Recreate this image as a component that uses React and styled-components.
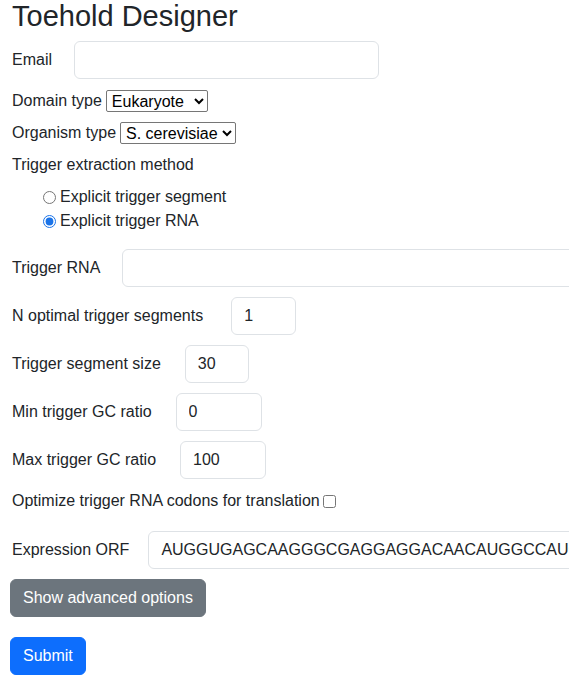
import React, { useState } from 'react';
import styled, { createGlobalStyle } from 'styled-components';

const GlobalStyle = createGlobalStyle`
  *, *::before, *::after { box-sizing: border-box; }
  body {
    margin: 0;
    font-family: "Liberation Sans", Arial, sans-serif;
    font-size: 16px;
    line-height: 1.5;
    color: #212529;
    background: #fff;
  }
`;

const Page = styled.div`
  padding: 0 12px;
  overflow: hidden;
`;

const Title = styled.h1`
  margin: 0 0 8px;
  font-size: 29px;
  font-weight: 500;
  line-height: 33px;
`;

const Row = styled.div`
  display: flex;
  align-items: center;
  gap: ${(p) => p.$gap ?? 24}px;
  margin-bottom: ${(p) => p.$mb ?? 10}px;
  white-space: nowrap;
`;

const Label = styled.label`
  flex: none;
`;

const TextInput = styled.input`
  flex: none;
  width: ${(p) => (p.$w ? `${p.$w}px` : 'auto')};
  min-width: ${(p) => (p.$w ? `${p.$w}px` : '0')};
  height: 38px;
  padding: 6px 12px;
  font: inherit;
  color: #212529;
  border: 1px solid #dee2e6;
  border-radius: 6px;
  background: #fff;
  outline: none;
`;

const Select = styled.select`
  font: inherit;
  font-size: 16px;
  height: 22px;
  padding: 0 1px;
  color: #000;
  border: 1px solid #767676;
  border-radius: 2px;
  background: #fff;
`;

const Inline = styled.div`
  display: flex;
  align-items: center;
  gap: ${(p) => p.$gap ?? 4}px;
  height: 24px;
  margin-bottom: ${(p) => p.$mb ?? 8}px;
`;

const RadioGroup = styled.div`
  padding-left: 31px;
  margin-bottom: 16px;
`;

const RadioLine = styled.label`
  display: flex;
  align-items: center;
  gap: 4px;
  height: 24px;

  input {
    margin: 0;
    width: 13px;
    height: 13px;
    accent-color: #1a73e8;
  }
`;

const Check = styled.input`
  margin: 0;
  width: 13px;
  height: 13px;
`;

const Button = styled.button`
  display: block;
  font: inherit;
  line-height: 24px;
  padding: 6px 12px;
  margin-left: -2px;
  margin-bottom: ${(p) => p.$mb ?? 0}px;
  color: #fff;
  border: 1px solid ${(p) => (p.$variant === 'primary' ? '#0d6efd' : '#6c757d')};
  background: ${(p) => (p.$variant === 'primary' ? '#0d6efd' : '#6c757d')};
  border-radius: 6px;
  cursor: pointer;
`;

export default function App() {
  const [method, setMethod] = useState('rna');
  return (
    <>
      <GlobalStyle />
      <Page>
        <Title>Toehold Designer</Title>

        <Row $gap={22}>
          <Label>Email</Label>
          <TextInput type="email" $w={305} />
        </Row>

        <Inline>
          <span>Domain type</span>
          <Select defaultValue="Eukaryote">
            <option>Prokaryote</option>
            <option>Eukaryote</option>
          </Select>
        </Inline>

        <Inline>
          <span>Organism type</span>
          <Select defaultValue="S. cerevisiae">
            <option>S. cerevisiae</option>
            <option>H. sapiens</option>
          </Select>
        </Inline>

        <Inline>Trigger extraction method</Inline>

        <RadioGroup>
          <RadioLine>
            <input
              type="radio"
              name="method"
              checked={method === 'segment'}
              onChange={() => setMethod('segment')}
            />
            Explicit trigger segment
          </RadioLine>
          <RadioLine>
            <input
              type="radio"
              name="method"
              checked={method === 'rna'}
              onChange={() => setMethod('rna')}
            />
            Explicit trigger RNA
          </RadioLine>
        </RadioGroup>

        <Row $gap={22}>
          <Label>Trigger RNA</Label>
          <TextInput $w={480} />
        </Row>

        <Row $gap={28}>
          <Label>N optimal trigger segments</Label>
          <TextInput $w={65} defaultValue="1" />
        </Row>

        <Row>
          <Label>Trigger segment size</Label>
          <TextInput $w={64} defaultValue="30" />
        </Row>

        <Row>
          <Label>Min trigger GC ratio</Label>
          <TextInput $w={86} defaultValue="0" />
        </Row>

        <Row>
          <Label>Max trigger GC ratio</Label>
          <TextInput $w={86} defaultValue="100" />
        </Row>

        <Inline $mb={18} $gap={3}>
          <span>Optimize trigger RNA codons for translation</span>
          <Check type="checkbox" />
        </Inline>

        <Row $gap={19}>
          <Label>Expression ORF</Label>
          <TextInput $w={480} defaultValue="AUGGUGAGCAAGGGCGAGGAGGACAACAUGGCCAUCAUCAAGGAGUUCAUGCGCUUCAAGGUG" />
        </Row>

        <Button $mb={20}>Show advanced options</Button>
        <Button $variant="primary">Submit</Button>
      </Page>
    </>
  );
}
